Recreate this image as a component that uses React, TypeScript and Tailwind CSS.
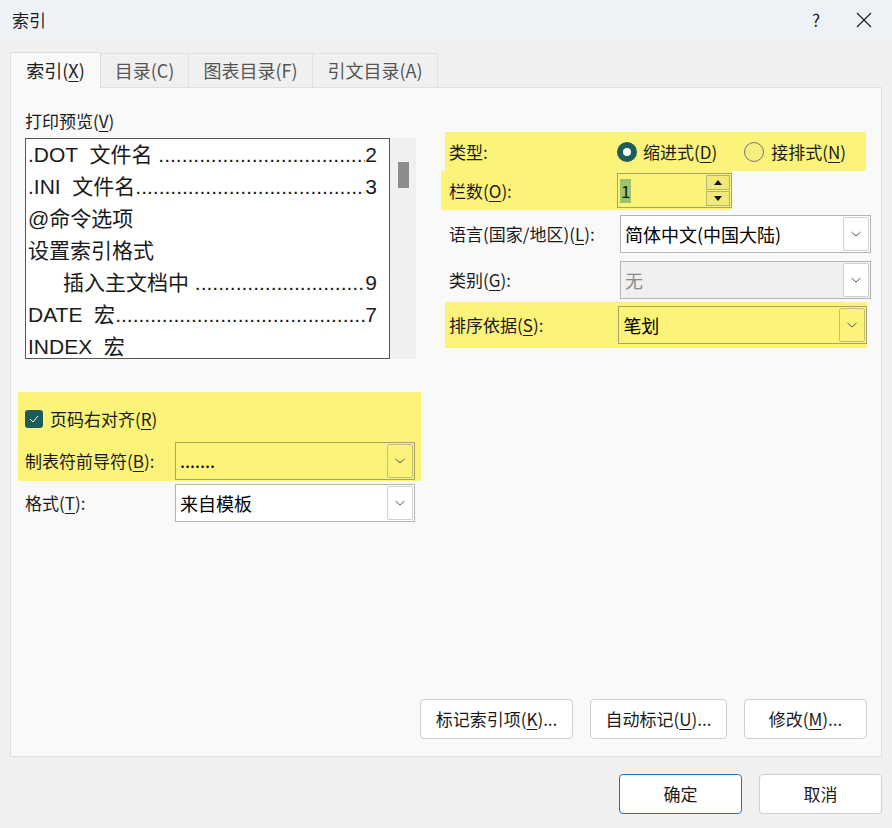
const font = { fontFamily: '"Noto Sans CJK SC", "Liberation Sans", sans-serif' };

function Chevron() {
  return (
    <svg width="12" height="8" viewBox="0 0 12 8" fill="none">
      <path d="M1.5 2 L6 6 L10.5 2" stroke="#555" strokeWidth="1" />
    </svg>
  );
}

function Combo({ value, width, disabled, yellow }: { value: string; width: string; disabled?: boolean; yellow?: boolean }) {
  const bg = yellow ? "bg-[#fbf37a] border-[#a8a560]" : disabled ? "bg-[#f0f0f0] border-[#b4b4b4]" : "bg-white border-[#b4b4b4]";
  return (
    <div className={`flex h-[38px] items-center border ${bg} ${width}`}>
      <span className={`flex-1 pl-[4px] text-[18px] ${disabled ? "text-[#8a8a8a]" : "text-black"}`}>{value}</span>
      <span className={`mr-[1px] flex h-[34px] w-[26px] items-center justify-center rounded-[2px] border ${yellow ? "border-[#c4c070] bg-[#fbf37a]" : "border-[#d0d0d0] bg-white"}`}>
        <Chevron />
      </span>
    </div>
  );
}

function U({ c }: { c: string }) {
  return <span className="underline underline-offset-[3px]">{c}</span>;
}

const preview = [
  { l: ".DOT  文件名 ", d: true, n: "2" },
  { l: ".INI  文件名", d: true, n: "3" },
  { l: "@命令选项", d: false, n: "" },
  { l: "设置索引格式", d: false, n: "" },
  { l: "      插入主文档中 ", d: true, n: "9" },
  { l: "DATE  宏", d: true, n: "7" },
  { l: "INDEX  宏", d: false, n: "" },
];

function Btn({ children, w, primary }: { children: React.ReactNode; w: string; primary?: boolean }) {
  return (
    <div className={`flex h-[40px] items-center justify-center rounded-[4px] border bg-white text-[17px] ${w} ${primary ? "border-[#1a73c8]" : "border-[#cfcfcf]"}`}>
      <span>{children}</span>
    </div>
  );
}

export default function App() {
  return (
    <div className="h-[828px] w-[892px] bg-[#f0f0f0] text-[17px] text-[#1a1a1a]" style={font}>
      <div className="flex h-[40px] items-center bg-[#eef2f7] pl-[12px]">
        <span className="flex-1 text-[17px]">索引</span>
        <span className="w-[40px] text-center text-[17px]">?</span>
        <span className="flex w-[56px] justify-center">
          <svg width="16" height="16" viewBox="0 0 16 16"><path d="M1 1 L15 15 M15 1 L1 15" stroke="#222" strokeWidth="1.3" /></svg>
        </span>
      </div>
      <div className="px-[10px] pt-[13px]">
        <div className="flex h-[35px] items-end text-[18px]">
          <div className="z-10 flex h-[36px] w-[91px] items-center justify-center border border-b-0 border-[#dedede] bg-[#f9f9f9] text-[#222]">
            <span>索引(<U c="X" />)</span>
          </div>
          {["目录(C)", "图表目录(F)", "引文目录(A)"].map((t, i) => (
            <div key={t} className={`flex h-[35px] items-center justify-center border border-l-0 border-[#e0e0e0] bg-[#f0f0f0] text-[#555] ${["w-[88px]", "w-[124px]", "w-[125px]"][i]}`}>
              {t}
            </div>
          ))}
        </div>
        <div className="-mt-px flex h-[670px] flex-col border border-[#e0e0e0] bg-[#f9f9f9]">
          <div className="flex flex-1">
            <div className="w-[420px] pl-[14px] pt-[20px]">
              <div className="h-[30px]">打印预览(<U c="V" />)</div>
              <div className="flex h-[221px]">
                <div className="w-[365px] overflow-hidden border border-[#555] bg-white pl-[2px] text-[21px] leading-[32px]" style={{ fontFamily: '"Liberation Sans", "Noto Sans CJK SC", sans-serif' }}>
                  {preview.map((p) => (
                    <div key={p.l} className="flex whitespace-pre pr-[12px]">
                      <span className="shrink-0">{p.l}</span>
                      {p.d && <span className="min-w-0 flex-1 overflow-hidden whitespace-nowrap">{".".repeat(80)}</span>}
                      <span className="shrink-0">{p.n}</span>
                    </div>
                  ))}
                </div>
                <div className="w-[26px] bg-[#f0f0f0] pl-[8px] pt-[24px]">
                  <div className="h-[26px] w-[11px] bg-[#8c8c8c]" />
                </div>
              </div>
              <div className="-ml-[7px] mt-[33px] h-[89px] w-[403px] bg-[#fbf37a] pl-[7px] pt-[14px]">
                <div className="flex items-center gap-[7px]">
                  <span className="flex h-[18px] w-[18px] items-center justify-center rounded-[3px] bg-[#1d5d59]">
                    <svg width="10" height="8" viewBox="0 0 10 8"><path d="M1 4 L4 7 L9 1" stroke="white" strokeWidth="1" fill="none" /></svg>
                  </span>
                  <span>页码右对齐(<U c="R" />)</span>
                </div>
                <div className="mt-[10px] flex items-center">
                  <span className="w-[150px]">制表符前导符(<U c="B" />):</span>
                  <Combo value="......." width="w-[240px]" yellow />
                </div>
              </div>
              <div className="mt-[3px] flex items-center">
                <span className="w-[150px]">格式(<U c="T" />):</span>
                <Combo value="来自模板" width="w-[240px]" />
              </div>
            </div>
            <div className="w-[450px] pl-[13px] pt-[44px]">
              <div className="ml-[1px] flex h-[39px] w-[421px] items-center bg-[#fbf37a] pl-[4px]">
                <span className="w-[168px]">类型:</span>
                <span className="flex items-center gap-[6px]">
                  <span className="flex h-[20px] w-[20px] items-center justify-center rounded-full bg-[#1d5d59]">
                    <span className="h-[8px] w-[8px] rounded-full bg-white" />
                  </span>
                  <span>缩进式(<U c="D" />)</span>
                </span>
                <span className="ml-[27px] flex items-center gap-[7px]">
                  <span className="h-[20px] w-[20px] rounded-full border border-[#777] bg-[#f6ef80]" />
                  <span>接排式(<U c="N" />)</span>
                </span>
              </div>
              <div className="-ml-[3px] flex h-[39px] w-[291px] items-center bg-[#fbf37a] pl-[8px]">
                <span className="w-[168px]">栏数(<U c="O" />):</span>
                <div className="flex h-[35px] w-[115px] items-center justify-between border border-[#a8a560] pl-[2px] pr-[1px]">
                  <span className="bg-[#9ec46a] px-[1px] leading-[24px]">1</span>
                  <div className="flex flex-col gap-[1px]">
                    {["M1 6 L5 1 L9 6Z", "M1 1 L5 6 L9 1Z"].map((d) => (
                      <span key={d} className="flex h-[15px] w-[24px] items-center justify-center border border-[#b8b470] bg-[#f2ea78]">
                        <svg width="10" height="7" viewBox="0 0 10 7"><path d={d} fill="#111" /></svg>
                      </span>
                    ))}
                  </div>
                </div>
              </div>
              <div className="mt-[5px] flex items-center pl-[5px]">
                <span className="w-[171px]">语言(国家/地区)(<U c="L" />):</span>
                <Combo value="简体中文(中国大陆)" width="w-[251px]" />
              </div>
              <div className="mt-[8px] flex items-center pl-[5px]">
                <span className="w-[171px]">类别(<U c="G" />):</span>
                <Combo value="无" width="w-[251px]" disabled />
              </div>
              <div className="ml-[1px] mt-[3px] flex h-[46px] w-[422px] items-center bg-[#fbf37a] pl-[4px]">
                <span className="w-[171px]">排序依据(<U c="S" />):</span>
                <Combo value="笔划" width="w-[251px]" yellow />
              </div>
            </div>
          </div>
          <div className="flex justify-end gap-[17px] pb-[17px] pr-[14px]">
            <Btn w="w-[153px]">标记索引项(<U c="K" />)...</Btn>
            <Btn w="w-[137px]">自动标记(<U c="U" />)...</Btn>
            <Btn w="w-[123px]">修改(<U c="M" />)...</Btn>
          </div>
        </div>
        <div className="mt-[17px] flex justify-end gap-[17px]">
          <Btn w="w-[123px]" primary>确定</Btn>
          <Btn w="w-[123px]">取消</Btn>
        </div>
      </div>
    </div>
  );
}
